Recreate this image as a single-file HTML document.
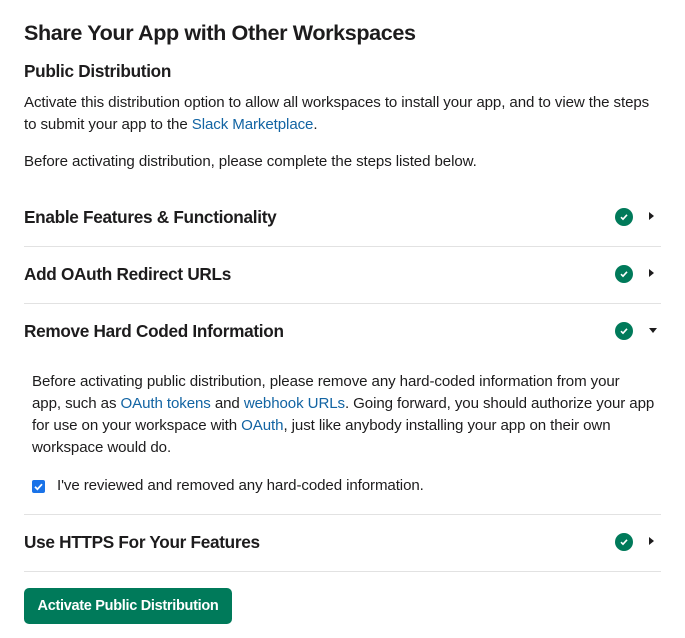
<!DOCTYPE html>
<html><head><style>
body{margin:0;width:685px;height:638px;background:#fff;font-family:"Liberation Sans",sans-serif;color:#1d1c1d;position:relative;overflow:hidden}
.a{position:absolute;white-space:nowrap;line-height:1}
.h1{font-size:21.6px;font-weight:bold;letter-spacing:-0.4px}
.h2{font-size:17.2px;font-weight:bold;letter-spacing:-0.3px}
.t{font-size:15.1px;letter-spacing:-0.1px}
.l{color:#1264a3}
.hr{position:absolute;left:24px;width:637px;height:1px;background:#e2e2e2}
.ck{position:absolute;width:18px;height:18px;border-radius:50%;background:#007a5a;left:615px}
.ck svg{position:absolute;left:4px;top:4px}
.ar{position:absolute;left:649px;width:0;height:0}
.ar.r{border-top:4px solid transparent;border-bottom:4px solid transparent;border-left:5px solid #1d1c1d}
.ar.d{border-left:4px solid transparent;border-right:4px solid transparent;border-top:5px solid #1d1c1d}
</style></head><body>
<div class="a h1" style="left:24px;top:22px">Share Your App with Other Workspaces</div>
<div class="a h2" style="left:24px;top:63px">Public Distribution</div>
<div class="a t" style="left:24px;top:95px">Activate this distribution option to allow all workspaces to install your app, and to view the steps</div>
<div class="a t" style="left:24px;top:117px">to submit your app to the <span class="l">Slack Marketplace</span>.</div>
<div class="a t" style="left:24px;top:154px">Before activating distribution, please complete the steps listed below.</div>

<div class="a h2" style="left:24px;top:209px">Enable Features &amp; Functionality</div>
<div class="ck" style="top:208px"><svg width="10" height="10" viewBox="0 0 10 10"><path d="M2 5.2l2 2 4-4.4" stroke="#fff" stroke-width="1.6" fill="none"/></svg></div>
<div class="ar r" style="top:212px"></div>
<div class="hr" style="top:246px"></div>

<div class="a h2" style="left:24px;top:266px">Add OAuth Redirect URLs</div>
<div class="ck" style="top:265px"><svg width="10" height="10" viewBox="0 0 10 10"><path d="M2 5.2l2 2 4-4.4" stroke="#fff" stroke-width="1.6" fill="none"/></svg></div>
<div class="ar r" style="top:269px"></div>
<div class="hr" style="top:303px"></div>

<div class="a h2" style="left:24px;top:323px">Remove Hard Coded Information</div>
<div class="ck" style="top:322px"><svg width="10" height="10" viewBox="0 0 10 10"><path d="M2 5.2l2 2 4-4.4" stroke="#fff" stroke-width="1.6" fill="none"/></svg></div>
<div class="ar d" style="top:328px"></div>

<div class="a t" style="left:32px;top:374px">Before activating public distribution, please remove any hard-coded information from your</div>
<div class="a t" style="left:32px;top:396px">app, such as <span class="l">OAuth tokens</span> and <span class="l">webhook URLs</span>. Going forward, you should authorize your app</div>
<div class="a t" style="left:32px;top:418px">for use on your workspace with <span class="l">OAuth</span>, just like anybody installing your app on their own</div>
<div class="a t" style="left:32px;top:440px">workspace would do.</div>
<div class="a" style="left:32px;top:480px;width:13px;height:13px;background:#1a73e8;border-radius:2px"><svg width="13" height="13" viewBox="0 0 13 13" style="position:absolute;left:0;top:0"><path d="M3 6.8l2.4 2.4 4.6-5" stroke="#fff" stroke-width="1.8" fill="none"/></svg></div>
<div class="a t" style="left:57px;top:478px">I've reviewed and removed any hard-coded information.</div>
<div class="hr" style="top:514px"></div>

<div class="a h2" style="left:24px;top:534px">Use HTTPS For Your Features</div>
<div class="ck" style="top:533px"><svg width="10" height="10" viewBox="0 0 10 10"><path d="M2 5.2l2 2 4-4.4" stroke="#fff" stroke-width="1.6" fill="none"/></svg></div>
<div class="ar r" style="top:537px"></div>
<div class="hr" style="top:571px"></div>

<div class="a" style="left:24px;top:588px;width:208px;height:36px;background:#007a5a;border-radius:5px;color:#fff;font-weight:bold;font-size:14.5px;letter-spacing:-0.3px;text-align:center;line-height:36px">Activate Public Distribution</div>
</body></html>
